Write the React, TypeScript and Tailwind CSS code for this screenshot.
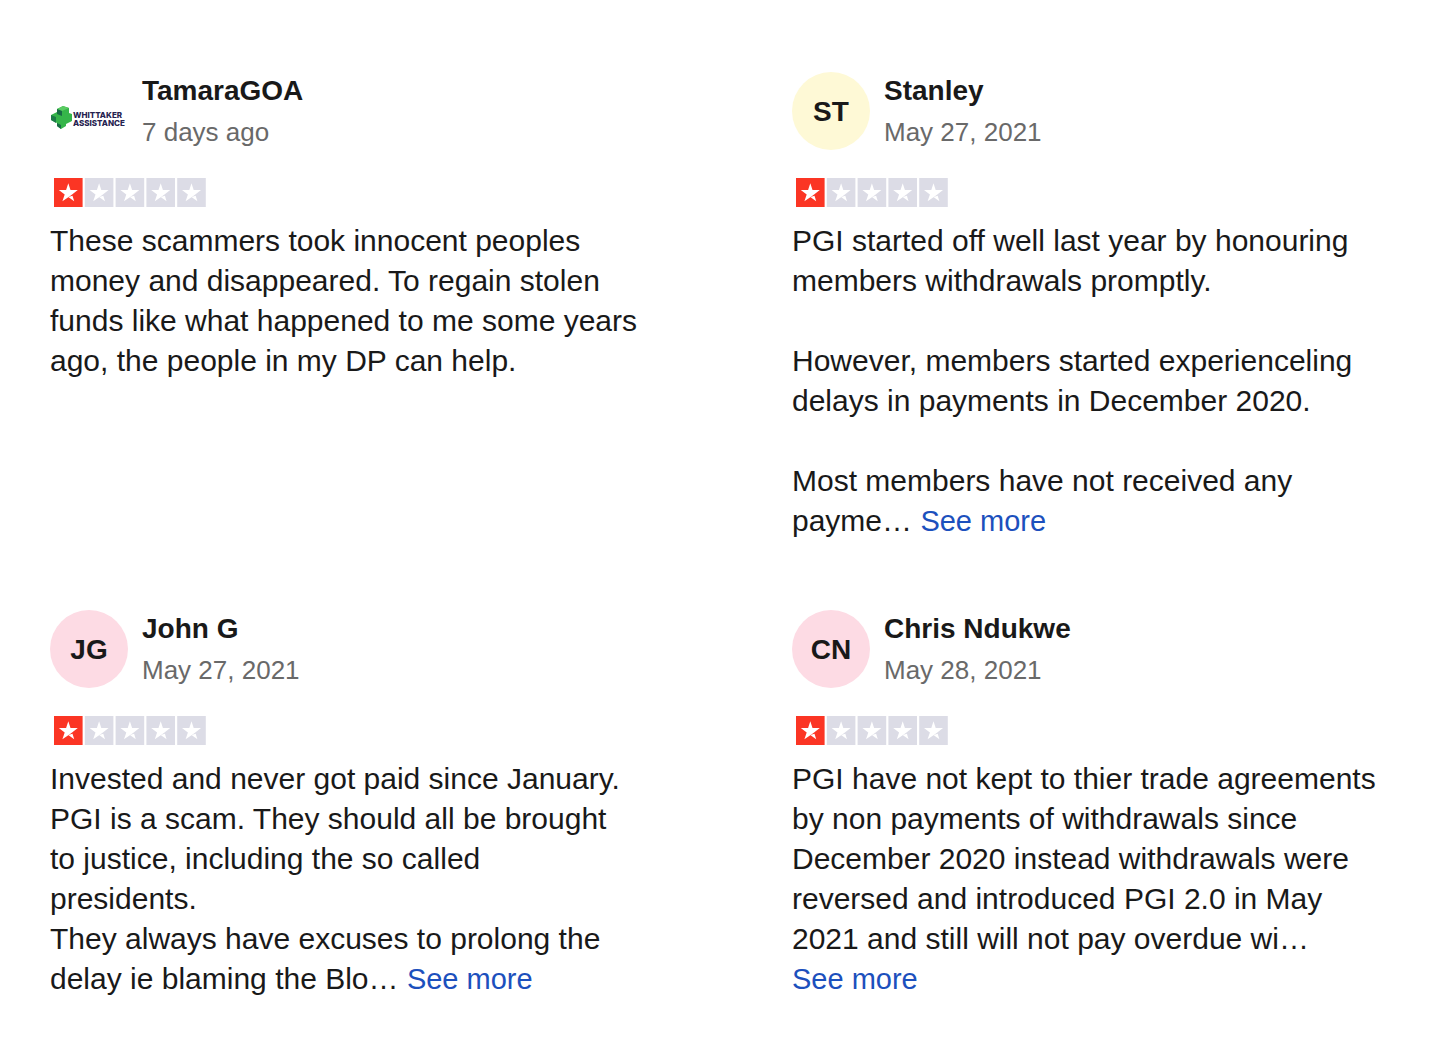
type Review = {
  name: string;
  date: string;
  initials?: string;
  tint?: string;
  text: string;
  truncated?: boolean;
};

const reviews: Review[] = [
  {
    name: "TamaraGOA",
    date: "7 days ago",
    text: "These scammers took innocent peoples\nmoney and disappeared. To regain stolen\nfunds like what happened to me some years\nago, the people in my DP can help.",
  },
  {
    name: "Stanley",
    date: "May 27, 2021",
    initials: "ST",
    tint: "bg-[#fef9d6]",
    text: "PGI started off well last year by honouring\nmembers withdrawals promptly.\n\nHowever, members started experienceling\ndelays in payments in December 2020.\n\nMost members have not received any\npayme… ",
    truncated: true,
  },
  {
    name: "John G",
    date: "May 27, 2021",
    initials: "JG",
    tint: "bg-[#fddbe4]",
    text: "Invested and never got paid since January.\nPGI is a scam. They should all be brought\nto justice, including the so called\npresidents.\nThey always have excuses to prolong the\ndelay ie blaming the Blo… ",
    truncated: true,
  },
  {
    name: "Chris Ndukwe",
    date: "May 28, 2021",
    initials: "CN",
    tint: "bg-[#fddbe4]",
    text: "PGI have not kept to thier trade agreements\nby non payments of withdrawals since\nDecember 2020 instead withdrawals were\nreversed and introduced PGI 2.0 in May\n2021 and still will not pay overdue wi…\n",
    truncated: true,
  },
];

function WhittakerLogo() {
  return (
    <svg viewBox="0 0 78 78" className="size-full" role="img" aria-label="Whittaker Assistance">
      {/* isometric cross: lit faces first, then the shaded left sides */}
      <path d="M7 37l6-3 6 2v5l3 1v7l-6 3v2l-5 3-4-3v-3l-6-3v-5l6-3z" fill="#35b54a" />
      <path d="M7 37l6-3 6 2-7 3z" fill="#5acb62" />
      <path d="M7 37l5 2v5l-5-2z" fill="#176b45" />
      <path d="M1 43l5 2v6l-5-3z" fill="#1c7a48" />
      <path d="M7 51l4 2v4l-4-3z" fill="#176b45" />
      <text x="23" y="46" fontSize="8" fontWeight="800" fill="#25224f" fontFamily="Inter, sans-serif">
        WHITTAKER
      </text>
      <text x="23" y="54" fontSize="8" fontWeight="800" fill="#25224f" fontFamily="Inter, sans-serif">
        ASSISTANCE
      </text>
    </svg>
  );
}

function Stars({ rating }: { rating: number }) {
  return (
    <div role="img" aria-label={`Rated ${rating} out of 5 stars`} className="ml-1 mt-7 flex">
      <svg viewBox="0 0 152 29" className="h-[29px] w-[152px]">
        {[0, 1, 2, 3, 4].map((i) => (
          <g key={i} transform={`translate(${i * 30.8} 0)`}>
            <rect width="28.6" height="29" fill={i < rating ? "#fb3524" : "#dcdce6"} />
            <path
              d="M14.3 5.2l2.2 6.9h7.3l-5.7 4.3-3.8 2.8-5.9 4.1 2.3-6.9-5.9-4.3h7.3z"
              fill="#fff"
            />
            <path d="M14.3 19l4.2-1.2 1.7 5.5z" fill="#fff" />
          </g>
        ))}
      </svg>
    </div>
  );
}

function ReviewCard({ review }: { review: Review }) {
  return (
    <article>
      <header className="flex h-[78px] gap-[14px]">
        {review.initials ? (
          <div
            className={`flex size-[78px] shrink-0 items-center justify-center rounded-full pt-0.5 text-[28px] font-bold ${review.tint}`}
          >
            {review.initials}
          </div>
        ) : (
          <div className="size-[78px] shrink-0">
            <WhittakerLogo />
          </div>
        )}
        <div>
          <h2 className="text-[28px] leading-[38px] font-bold">{review.name}</h2>
          <p className="text-[26px] leading-[44px] text-[#696969]">{review.date}</p>
        </div>
      </header>
      <Stars rating={1} />
      <p className="mt-[14px] text-[30px] leading-10 whitespace-pre-line">
        {review.text}
        {review.truncated && (
          <a href="#more" className="text-[29px] leading-9 text-[#1c50bd]">
            See more
          </a>
        )}
      </p>
    </article>
  );
}

export default function App() {
  return (
    <main className="grid min-h-screen grid-cols-2 content-start gap-x-32 gap-y-[69px] bg-white px-[50px] pt-[72px] pb-10 font-['Liberation_Sans',Arial,sans-serif] text-[#191919]">
      {reviews.map((r) => (
        <ReviewCard key={r.name} review={r} />
      ))}
    </main>
  );
}
